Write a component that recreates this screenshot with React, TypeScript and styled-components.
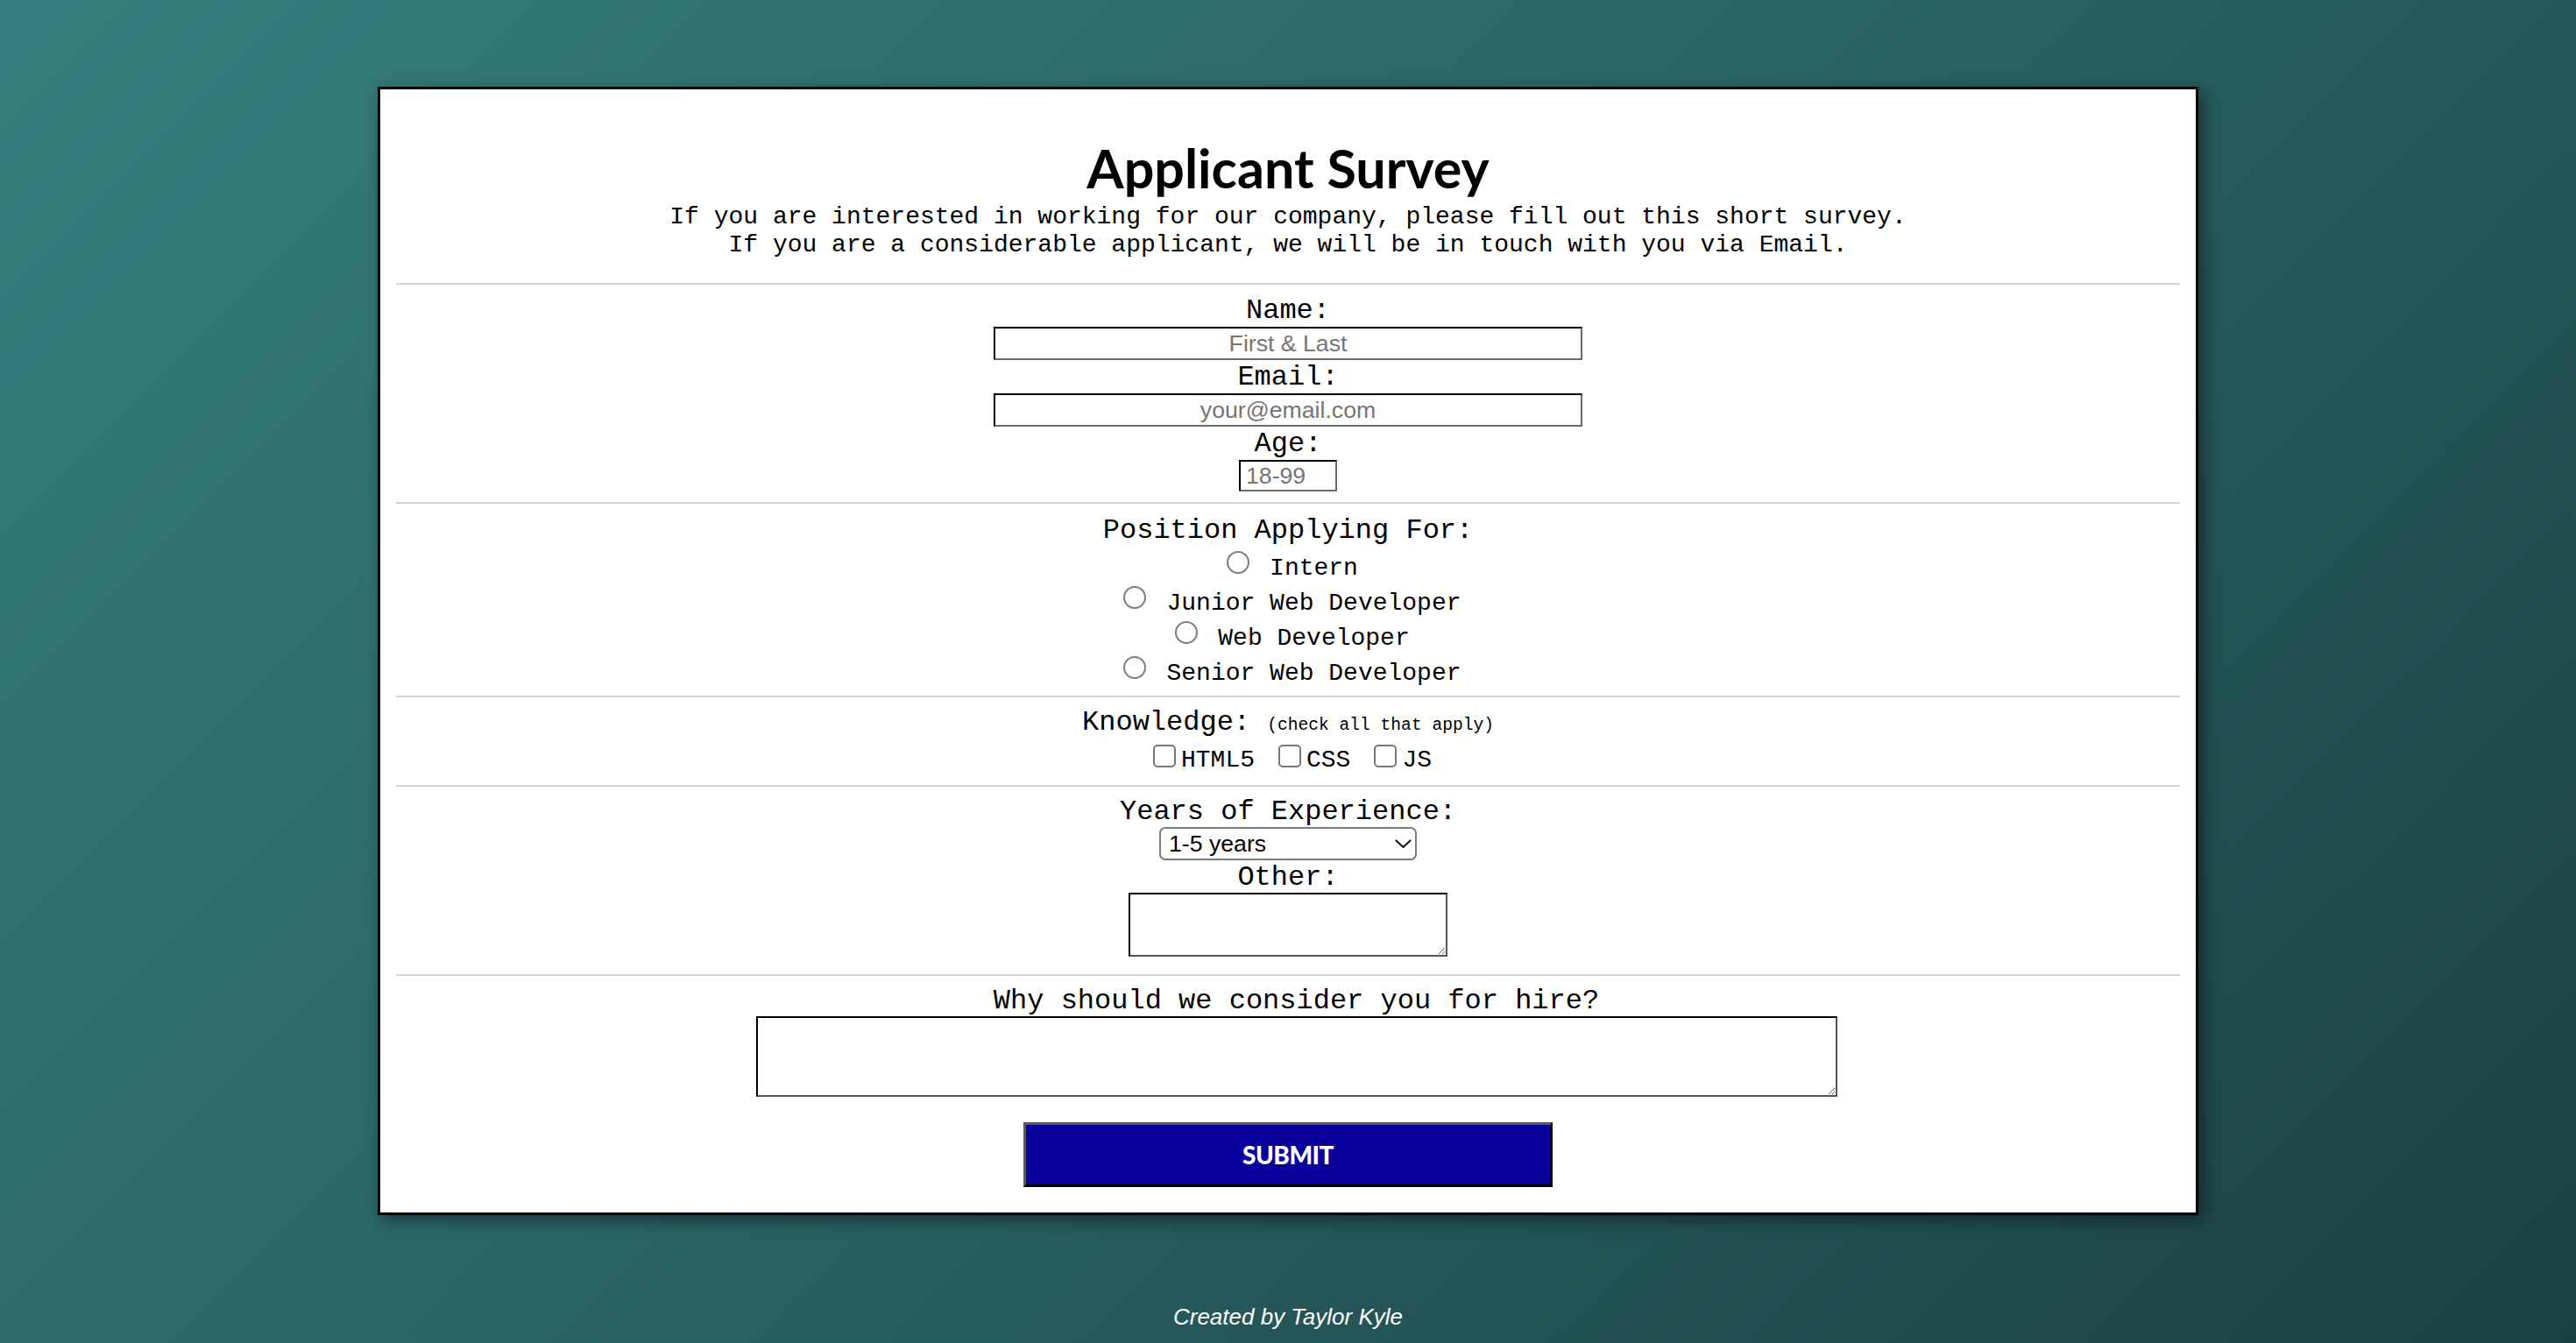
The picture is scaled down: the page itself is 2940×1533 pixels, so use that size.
import React from "react";
import styled, { createGlobalStyle } from "styled-components";

const Global = createGlobalStyle`
  html, body { margin: 0; padding: 0; }
  body { font-family: "Liberation Mono", "Courier New", monospace; color: #000; }
  *, *::before, *::after { box-sizing: border-box; }
`;

const Page = styled.div`
  min-height: 100vh;
  background: linear-gradient(135deg, #367e7d 0%, #2b6566 45%, #1b4042 100%);
  padding-top: 99px;
  display: flex;
  flex-direction: column;
  align-items: center;
`;

const Card = styled.main`
  width: 2078px;
  background: #fff;
  border: 3px solid #000;
  box-shadow: 6px 6px 18px rgba(0, 0, 0, 0.45);
  padding: 54px 18px 0;
`;

const Header = styled.header`
  text-align: center;
  padding-bottom: 27px;
`;

const Title = styled.h1`
  margin: 0;
  font-family: "Lato", "Open Sans", sans-serif;
  font-weight: 700;
  font-size: 61px;
  line-height: 72px;
`;

const Subtitle = styled.p`
  margin: 4px 0 0;
  font-size: 28px;
  line-height: 32px;
`;

const Divider = styled.hr`
  border: 0;
  height: 2px;
  margin: 0;
  background: #d6d6d6;
`;

const Section = styled.section<{ $pt: number; $pb: number }>`
  display: flex;
  flex-direction: column;
  align-items: center;
  padding: ${(p) => p.$pt}px 0 ${(p) => p.$pb}px;
`;

const FieldLabel = styled.label<{ $shift?: boolean }>`
  display: block;
  font-size: 32px;
  line-height: 36px;
  padding-top: 2px;
  margin-bottom: -2px;
  text-align: center;
  margin-left: ${(p) => (p.$shift ? "19px" : "0")};
`;

const Small = styled.span`
  font-size: 19.6px;
`;

const TextInput = styled.input<{ $w: number; $h: number; $align: "center" | "left" }>`
  width: ${(p) => p.$w}px;
  height: ${(p) => p.$h}px;
  margin: 2px 0 0;
  border-style: solid;
  border-width: 2px;
  border-color: #000 #6b6b6b #6b6b6b #000;
  padding: 0 6px;
  font-family: "Liberation Sans", Arial, sans-serif;
  font-size: 26.67px;
  text-align: ${(p) => p.$align};
  background: #fff;
  &::placeholder { color: #757575; }
`;

const Options = styled.div`
  margin-top: 3px;
  display: flex;
  flex-direction: column;
  align-items: center;
`;

const Option = styled.label`
  display: flex;
  align-items: center;
  justify-content: center;
  height: 40px;
`;

const Radio = styled.input`
  appearance: none;
  width: 26px;
  height: 26px;
  margin: 0 6px 6px 10px;
  border: 2px solid #7d7d7d;
  border-radius: 50%;
  background: #fff;
`;

const OptionText = styled.span`
  font-size: 28px;
  line-height: 40px;
  padding-top: 8px;
  margin-left: 17px;
`;

const CheckRow = styled.div`
  margin-top: 2px;
  height: 40px;
  display: flex;
  align-items: center;
  justify-content: center;
`;

const CheckItem = styled.label`
  display: flex;
  align-items: center;
  & + & { margin-left: 17px; }
`;

const Checkbox = styled.input`
  appearance: none;
  width: 26px;
  height: 26px;
  margin: 0 6px 6px 10px;
  border: 2px solid #787878;
  border-radius: 5px;
  background: #fff;
`;

const CheckText = styled.span`
  font-size: 28px;
  line-height: 40px;
  padding-top: 3px;
`;

const SelectWrap = styled.div`
  position: relative;
  margin-top: 1px;
  width: 294px;
  height: 38px;
`;

const Select = styled.select`
  appearance: none;
  width: 100%;
  height: 100%;
  border: 2px solid #7a7a7a;
  border-radius: 7px;
  padding: 0 36px 0 9px;
  font-family: "Liberation Sans", Arial, sans-serif;
  font-size: 26.67px;
  color: #000;
  background: #fff;
`;

const Chevron = styled.svg`
  position: absolute;
  right: 6px;
  top: 14px;
  width: 19px;
  height: 11px;
  pointer-events: none;
`;

const TextArea = styled.textarea<{ $w: number; $h: number; $shift?: boolean }>`
  display: block;
  width: ${(p) => p.$w}px;
  height: ${(p) => p.$h}px;
  margin-top: 1px;
  margin-left: ${(p) => (p.$shift ? "19px" : "0")};
  border-style: solid;
  border-width: 2px;
  border-color: #000 #555 #555 #000;
  font-family: "Liberation Mono", monospace;
  font-size: 26px;
  resize: both;
`;

const Submit = styled.button`
  width: 604px;
  height: 74px;
  margin-top: 29px;
  background: #0a009c;
  border-style: solid;
  border-width: 3px;
  border-color: #5a5a5a #000 #000 #5a5a5a;
  color: #fff;
  font-family: "Lato", "Open Sans", sans-serif;
  font-weight: 900;
  font-size: 28px;
  letter-spacing: -0.5px;
  text-transform: uppercase;
`;

const Footer = styled.footer`
  margin-top: 101px;
  font-family: "Liberation Sans", Arial, sans-serif;
  font-style: italic;
  font-size: 26px;
  line-height: 30px;
  color: #fff;
  text-align: center;
`;

const positions = ["Intern", "Junior Web Developer", "Web Developer", "Senior Web Developer"];
const skills = ["HTML5", "CSS", "JS"];

export default function App() {
  return (
    <>
      <Global />
      <Page>
        <Card>
          <Header>
            <Title>Applicant Survey</Title>
            <Subtitle>
              If you are interested in working for our company, please fill out this short survey.
              <br />
              If you are a considerable applicant, we will be in touch with you via Email.
            </Subtitle>
          </Header>
          <Divider />
          <Section $pt={10} $pb={12}>
            <FieldLabel htmlFor="name">Name:</FieldLabel>
            <TextInput id="name" type="text" placeholder="First & Last" $w={672} $h={38} $align="center" />
            <FieldLabel htmlFor="email">Email:</FieldLabel>
            <TextInput id="email" type="email" placeholder="your@email.com" $w={672} $h={38} $align="center" />
            <FieldLabel htmlFor="age">Age:</FieldLabel>
            <TextInput id="age" type="text" placeholder="18-99" $w={112} $h={36} $align="left" />
          </Section>
          <Divider />
          <Section $pt={11} $pb={9}>
            <FieldLabel as="div">Position Applying For:</FieldLabel>
            <Options>
              {positions.map((p) => (
                <Option key={p}>
                  <Radio type="radio" name="position" value={p} />
                  <OptionText>{p}</OptionText>
                </Option>
              ))}
            </Options>
          </Section>
          <Divider />
          <Section $pt={9} $pb={10}>
            <FieldLabel as="div">
              Knowledge: <Small>(check all that apply)</Small>
            </FieldLabel>
            <CheckRow>
              {skills.map((s) => (
                <CheckItem key={s}>
                  <Checkbox type="checkbox" value={s} />
                  <CheckText>{s}</CheckText>
                </CheckItem>
              ))}
            </CheckRow>
          </Section>
          <Divider />
          <Section $pt={9} $pb={20}>
            <FieldLabel htmlFor="years">Years of Experience:</FieldLabel>
            <SelectWrap>
              <Select id="years" defaultValue="1-5">
                <option value="1-5">1-5 years</option>
                <option value="5-10">5-10 years</option>
                <option value="10+">10+ years</option>
              </Select>
              <Chevron viewBox="0 0 19 11" fill="none">
                <path d="M1.5 1.5 L9.5 9 L17.5 1.5" stroke="#1a1a1a" strokeWidth="2.2" strokeLinecap="round" strokeLinejoin="round" />
              </Chevron>
            </SelectWrap>
            <FieldLabel htmlFor="other">Other:</FieldLabel>
            <TextArea id="other" $w={364} $h={73} />
          </Section>
          <Divider />
          <Section $pt={9} $pb={29}>
            <FieldLabel htmlFor="why" $shift>Why should we consider you for hire?</FieldLabel>
            <TextArea id="why" $w={1234} $h={92} $shift />
            <Submit type="submit">Submit</Submit>
          </Section>
        </Card>
        <Footer>Created by Taylor Kyle</Footer>
      </Page>
    </>
  );
}
